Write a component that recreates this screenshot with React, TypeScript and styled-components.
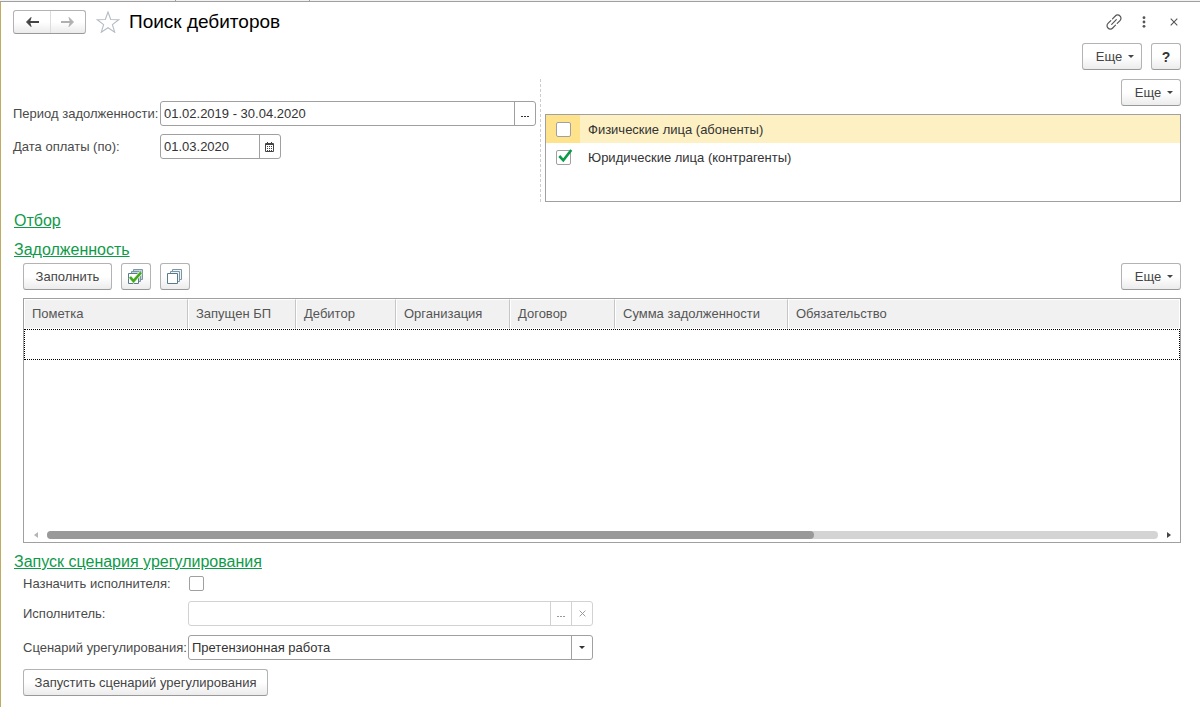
import React, { useState } from "react";
import styled, { createGlobalStyle, css } from "styled-components";

const GlobalStyle = createGlobalStyle`
  *, *::before, *::after { box-sizing: border-box; }
  body {
    margin: 0;
    background: #fff;
    color: #4a4a4a;
    font: 13px/16px "Liberation Sans", Arial, sans-serif;
  }
  button, input, select { font: inherit; color: inherit; }
`;

const Page = styled.div`
  display: flex;
  flex-direction: column;
  min-height: 100vh;
`;

const TabStrip = styled.div`
  display: flex;
  height: 2px;
  background: #f2f2f2;
  border-bottom: 1px solid #a0a0a0;
`;

const TabEdge = styled.span<{ $width: number }>`
  width: ${(p) => p.$width}px;
  border-right: 1px solid #a0a0a0;
`;

const Form = styled.main`
  flex: 1;
  display: flex;
  flex-direction: column;
  padding: 8px 19px 11px 12px;
  border-left: 1px solid #c0ab62;
`;

const TitleBar = styled.header`
  display: flex;
  align-items: center;
  height: 24px;
`;

const NavGroup = styled.div`
  display: flex;
  height: 24px;
  border: 1px solid #b3b3b3;
  border-bottom-color: #999;
  border-radius: 3px;
  background: linear-gradient(#fff 50%, #ebebeb);
`;

const NavButton = styled.button`
  display: grid;
  place-items: center;
  width: 36px;
  padding: 0;
  border: 0;
  background: none;
  color: #444;
  & + & {
    width: 35px;
    border-left: 1px solid #ddd;
    color: #b0b0b0;
  }
`;

const PlainButton = styled.button`
  display: grid;
  place-items: center;
  width: 24px;
  height: 24px;
  padding: 0;
  border: 0;
  background: none;
  color: #555;
`;

const StarButton = styled(PlainButton)`
  margin-left: 10px;
`;

const Title = styled.h1`
  flex: 1;
  margin: 0 0 0 9px;
  color: #000;
  font-size: 19px;
  line-height: 24px;
  font-weight: 400;
`;

const WindowActions = styled.div`
  display: flex;
  gap: 6px;
  margin-right: -5px;
`;

const Bar = styled.div<{ $end?: boolean }>`
  display: flex;
  gap: 9px;
  justify-content: ${(p) => (p.$end ? "flex-end" : "flex-start")};
`;

const TopBar = styled(Bar)`
  margin-top: 9px;
`;

const Spacer = styled.span`
  flex: 1;
`;

const Button = styled.button<{ $width?: number; $bold?: boolean }>`
  display: inline-flex;
  align-items: center;
  justify-content: center;
  gap: 6px;
  height: 27px;
  min-width: ${(p) => p.$width ?? 30}px;
  padding: 0;
  border: 1px solid #b3b3b3;
  border-bottom-color: #999;
  border-radius: 3px;
  background: linear-gradient(#fff 50%, #ececec);
  color: #444;
  white-space: nowrap;
  ${(p) => p.$bold && css`font-size: 14px; font-weight: 700; color: #333;`}
`;

const MoreButton = styled(Button)`
  width: 60px;
  padding: 0 6px 0 12px;
`;

const Params = styled.section`
  display: grid;
  grid-template-columns: minmax(0, 523fr) 9px minmax(0, 636fr);
  margin-top: 9px;
`;

const Splitter = styled.div`
  margin-left: 4px;
  border-left: 1px dashed #ccc;
`;

const ParamFields = styled.div`
  display: flex;
  flex-direction: column;
  gap: 8px;
  padding-top: 22px;
`;

const Row = styled.div<{ $labelWidth: number }>`
  display: grid;
  grid-template-columns: ${(p) => p.$labelWidth}px minmax(0, 1fr);
  align-items: center;
`;

const Label = styled.label`
  white-space: nowrap;
`;

const Field = styled.div<{ $width?: number; $disabled?: boolean }>`
  display: flex;
  height: 25px;
  width: 100%;
  ${(p) => p.$width && css`max-width: ${p.$width}px;`}
  --line: ${(p) => (p.$disabled ? "#d2d2d2" : "#a0a0a0")};
  border: 1px solid var(--line);
  border-radius: 3px;
  color: ${(p) => (p.$disabled ? "#999" : "#333")};
  background: #fff;
`;

const TextInput = styled.input`
  flex: 1;
  min-width: 0;
  padding: 0 3px;
  border: 0;
  outline: 0;
  background: none;
`;

const FieldButton = styled.button`
  display: grid;
  place-items: center;
  width: 21px;
  padding: 0;
  border: 0;
  border-left: 1px solid var(--line);
  background: none;
`;

const SelectBox = styled(Field)`
  display: grid;
  grid-template-columns: minmax(0, 1fr) 21px;
`;

const Select = styled.select`
  grid-area: 1 / 1 / 2 / 3;
  appearance: none;
  padding: 0 24px 0 3px;
  border: 0;
  outline: 0;
  background: none;
`;

const SelectArrow = styled.span`
  grid-area: 1 / 2 / 2 / 3;
  display: grid;
  place-items: center;
  border-left: 1px solid var(--line);
  pointer-events: none;
`;

const KindPanel = styled.div`
  display: flex;
  flex-direction: column;
  gap: 8px;
`;

const KindList = styled.ul`
  height: 88px;
  margin: 0;
  padding: 0;
  list-style: none;
  border: 1px solid #a0a0a0;
`;

const KindItem = styled.li<{ $current?: boolean }>`
  display: grid;
  grid-template-columns: 34px 1fr;
  height: 28px;
  background: ${(p) => (p.$current ? "#fdf1c4" : "#fff")};
  color: #333;
  & > span {
    display: grid;
    place-items: center;
    background: ${(p) => (p.$current ? "#fee38c" : "#fff")};
  }
  & > label {
    padding-left: 8px;
    line-height: 29px;
  }
`;

const CheckWrap = styled.span`
  display: grid;
  width: 15px;
  height: 15px;
  & > * {
    grid-area: 1 / 1;
  }
  & > svg {
    overflow: visible;
    pointer-events: none;
  }
`;

const CheckInput = styled.input`
  appearance: none;
  width: 15px;
  height: 15px;
  margin: 0;
  border: 1px solid #a0a0a0;
  border-radius: 2px;
  background: #fff;
`;

const Heading = styled.h2`
  margin: 0;
  font-size: 16px;
  line-height: 20px;
  font-weight: 400;
`;

const HeadingLink = styled.a`
  margin-left: 1px;
  color: #0f9a4a;
  text-decoration: underline;
`;

const Group = styled.section<{ $grow?: boolean }>`
  display: flex;
  flex-direction: column;
  flex: ${(p) => (p.$grow ? "1" : "none")};
  margin-top: 9px;
`;

const GroupBody = styled.div<{ $grow?: boolean; $gap: number; $top: number }>`
  display: flex;
  flex-direction: column;
  flex: ${(p) => (p.$grow ? "1" : "none")};
  gap: ${(p) => p.$gap}px;
  padding: ${(p) => p.$top}px 0 0 10px;
`;

const TablePanel = styled.div`
  display: flex;
  flex-direction: column;
  flex: 1;
  min-height: 160px;
  border: 1px solid #a0a0a0;
`;

const Table = styled.table`
  width: 100%;
  table-layout: fixed;
  border-collapse: separate;
  border-spacing: 0;
`;

const HeadCell = styled.th<{ $width?: number }>`
  ${(p) => p.$width && css`width: ${p.$width}px;`}
  height: 30px;
  padding: 0 7px;
  border: 1px solid #fff;
  border-right-color: #c6c6c6;
  background: #f1f1f1;
  color: #555;
  font-weight: 400;
  text-align: left;
  white-space: nowrap;
  &:last-child {
    border-right-color: #fff;
  }
`;

const CurrentRow = styled.tr`
  outline: 1px dotted #000;
  outline-offset: -1px;
`;

const BodyCell = styled.td`
  height: 31px;
  padding: 0;
`;

const ScrollBar = styled.div`
  display: flex;
  align-items: center;
  gap: 9px;
  margin-top: auto;
  height: 15px;
  padding: 0 8px 0 9px;
`;

const Track = styled.div`
  flex: 1;
  height: 8px;
  border-radius: 4px;
  background: #d4d4d4;
`;

const Thumb = styled.div`
  width: 69%;
  height: 8px;
  border-radius: 4px;
  background: #999;
`;

const CheckRow = styled(Row)`
  height: 17px;
`;

const BackArrow = () => (
  <svg width="14" height="10" viewBox="0 0 14 10" fill="none" stroke="currentColor" strokeWidth="2">
    <path d="M14 5H3" />
    <path d="M6 .5 1.500 5 6 9.500 4.500 5z" fill="currentColor" strokeWidth="1" />
  </svg>
);

const ForwardArrow = () => (
  <svg width="14" height="10" viewBox="0 0 14 10" fill="none" stroke="currentColor" strokeWidth="2">
    <path d="M0 5H11" />
    <path d="M8 .5 12.500 5 8 9.500 9.500 5z" fill="currentColor" strokeWidth="1" />
  </svg>
);

const Star = () => (
  <svg width="24" height="22" viewBox="0 0 24 22" fill="none" stroke="#b4bcc4" strokeWidth="1.100">
    <path d="M12 1l2.700 7.500 8 .2-6.300 4.900 2.300 7.600L12 16.700l-6.700 4.500 2.300-7.600L1.300 8.700l8-.2z" />
  </svg>
);

const LinkIcon = () => (
  <svg width="16" height="16" viewBox="0 0 16 16" fill="none" stroke="currentColor" strokeWidth="1.200" strokeLinecap="round">
    <path d="M6.500 4.800 9.300 2a3.200 3.200 0 0 1 4.700 0 3.200 3.200 0 0 1 0 4.600L11.200 9.400" />
    <path d="M9.500 11.200 6.700 14a3.200 3.200 0 0 1-4.700 0 3.200 3.200 0 0 1 0-4.600L4.800 6.600" />
    <path d="M5.700 10.300 10.300 5.700" />
  </svg>
);

const Dots = () => (
  <svg width="4" height="12" viewBox="0 0 4 12" fill="currentColor">
    <circle cx="2" cy="1.700" r="1.400" />
    <circle cx="2" cy="6" r="1.400" />
    <circle cx="2" cy="10.300" r="1.400" />
  </svg>
);

const Cross = ({ size }: { size: number }) => (
  <svg width={size} height={size} viewBox="0 0 8 8" fill="none" stroke="currentColor" strokeWidth="1.100">
    <path d="M.7.7l6.600 6.600M7.300.7.7 7.300" />
  </svg>
);

const Caret = () => (
  <svg width="6" height="3" viewBox="0 0 6 3" fill="currentColor">
    <path d="M0 0h6L3 3z" />
  </svg>
);

const Ellipsis = () => (
  <svg width="9" height="9" viewBox="0 0 9 9" fill="currentColor">
    <path d="M0 7h2v1H0zM3 7h2v1H3zM6 7h2v1H6z" />
  </svg>
);

const CalendarIcon = () => (
  <svg width="10" height="10" viewBox="0 0 10 10" fill="none" stroke="#444">
    <path d="M.5 1.500h8v8h-8zM.5 2.500h8M2.500 0v2M6.500 0v2" />
    <path d="M2 4.500h6M2 6.500h6M2 8.500h6" strokeDasharray="1 1" />
  </svg>
);

const Tick = () => (
  <svg width="15" height="15" viewBox="0 0 15 15" fill="none" stroke="#0c9a48" strokeWidth="2.600">
    <path d="M3.300 6l4 4.300L15.300 0" />
  </svg>
);

const Stack = ({ checked }: { checked?: boolean }) => (
  <svg width="16" height="16" viewBox="0 0 16 16" fill={checked ? "#c5d9dc" : "#eef4f7"} stroke="#7c96a5">
    <path d="M5.500.5h9v10h-9z" />
    <path d="M3.500 2.500h9v10h-9z" />
    <path d="M.5 4.500h10v10H.5z" fill="#fff" stroke="#587a8c" />
    {checked && <path d="M2 8l3.500 4L13 3.500" fill="none" stroke="#e4f5d8" strokeWidth="4" />}
    {checked && <path d="M2 8l3.500 4L13 3.500" fill="none" stroke="#43a81c" strokeWidth="2.600" />}
  </svg>
);

const ScrollArrow = ({ right }: { right?: boolean }) => (
  <svg width="5" height="6" viewBox="0 0 5 6" fill={right ? "#444" : "#b5b5b5"}>
    <path d={right ? "M0 0v6l4-3z" : "M5 0v6L1 3z"} />
  </svg>
);

interface CheckProps {
  id: string;
  checked: boolean;
  onChange: (value: boolean) => void;
}

const CheckBox = ({ id, checked, onChange }: CheckProps) => (
  <CheckWrap>
    <CheckInput id={id} type="checkbox" checked={checked} onChange={(e) => onChange(e.target.checked)} />
    {checked && <Tick />}
  </CheckWrap>
);

const More = () => (
  <MoreButton type="button">
    Еще <Caret />
  </MoreButton>
);

const columns: { title: string; width?: number }[] = [
  { title: "Пометка", width: 164 },
  { title: "Запущен БП", width: 108 },
  { title: "Дебитор", width: 100 },
  { title: "Организация", width: 114 },
  { title: "Договор", width: 105 },
  { title: "Сумма задолженности", width: 173 },
  { title: "Обязательство" },
];

export default function App() {
  const [persons, setPersons] = useState(false);
  const [companies, setCompanies] = useState(true);
  const [assign, setAssign] = useState(false);
  const [period, setPeriod] = useState("01.02.2019 - 30.04.2020");
  const [date, setDate] = useState("01.03.2020");

  return (
    <Page>
      <GlobalStyle />
      <TabStrip>
        <TabEdge $width={176} />
        <TabEdge $width={134} />
      </TabStrip>
      <Form>
        <TitleBar>
          <NavGroup>
            <NavButton type="button" aria-label="Назад"><BackArrow /></NavButton>
            <NavButton type="button" aria-label="Вперед"><ForwardArrow /></NavButton>
          </NavGroup>
          <StarButton type="button" aria-label="В избранное"><Star /></StarButton>
          <Title>Поиск дебиторов</Title>
          <WindowActions>
            <PlainButton type="button" aria-label="Ссылка"><LinkIcon /></PlainButton>
            <PlainButton type="button" aria-label="Меню"><Dots /></PlainButton>
            <PlainButton type="button" aria-label="Закрыть"><Cross size={8} /></PlainButton>
          </WindowActions>
        </TitleBar>

        <TopBar $end>
          <More />
          <Button type="button" $bold>?</Button>
        </TopBar>

        <Params>
          <ParamFields>
            <Row $labelWidth={147}>
              <Label htmlFor="period">Период задолженности:</Label>
              <Field>
                <TextInput id="period" value={period} onChange={(e) => setPeriod(e.target.value)} />
                <FieldButton type="button" aria-label="Выбрать период"><Ellipsis /></FieldButton>
              </Field>
            </Row>
            <Row $labelWidth={147}>
              <Label htmlFor="date">Дата оплаты (по):</Label>
              <Field $width={121}>
                <TextInput id="date" value={date} onChange={(e) => setDate(e.target.value)} />
                <FieldButton type="button" aria-label="Календарь"><CalendarIcon /></FieldButton>
              </Field>
            </Row>
          </ParamFields>
          <Splitter />
          <KindPanel>
            <Bar $end><More /></Bar>
            <KindList>
              <KindItem $current>
                <span><CheckBox id="persons" checked={persons} onChange={setPersons} /></span>
                <label htmlFor="persons">Физические лица (абоненты)</label>
              </KindItem>
              <KindItem>
                <span><CheckBox id="companies" checked={companies} onChange={setCompanies} /></span>
                <label htmlFor="companies">Юридические лица (контрагенты)</label>
              </KindItem>
            </KindList>
          </KindPanel>
        </Params>

        <Group>
          <Heading><HeadingLink href="#filter">Отбор</HeadingLink></Heading>
        </Group>

        <Group $grow>
          <Heading><HeadingLink href="#debt">Задолженность</HeadingLink></Heading>
          <GroupBody $grow $gap={8} $top={3}>
            <Bar>
              <Button type="button" $width={89}>Заполнить</Button>
              <Button type="button" aria-label="Отметить все"><Stack checked /></Button>
              <Button type="button" aria-label="Снять отметки"><Stack /></Button>
              <Spacer />
              <More />
            </Bar>
            <TablePanel>
              <Table>
                <thead>
                  <tr>
                    {columns.map((c) => (
                      <HeadCell key={c.title} $width={c.width} scope="col">{c.title}</HeadCell>
                    ))}
                  </tr>
                </thead>
                <tbody>
                  <CurrentRow>
                    {columns.map((c) => <BodyCell key={c.title} />)}
                  </CurrentRow>
                </tbody>
              </Table>
              <ScrollBar>
                <ScrollArrow />
                <Track><Thumb /></Track>
                <ScrollArrow right />
              </ScrollBar>
            </TablePanel>
          </GroupBody>
        </Group>

        <Group>
          <Heading><HeadingLink href="#scenario">Запуск сценария урегулирования</HeadingLink></Heading>
          <GroupBody $gap={9} $top={3}>
            <CheckRow $labelWidth={166}>
              <Label htmlFor="assign">Назначить исполнителя:</Label>
              <CheckBox id="assign" checked={assign} onChange={setAssign} />
            </CheckRow>
            <Row $labelWidth={165}>
              <Label htmlFor="executor">Исполнитель:</Label>
              <Field $width={405} $disabled>
                <TextInput id="executor" disabled />
                <FieldButton type="button" disabled aria-label="Выбрать"><Ellipsis /></FieldButton>
                <FieldButton type="button" disabled aria-label="Очистить"><Cross size={7} /></FieldButton>
              </Field>
            </Row>
            <Row $labelWidth={165}>
              <Label htmlFor="scenario">Сценарий урегулирования:</Label>
              <SelectBox $width={405}>
                <Select id="scenario" defaultValue="claim">
                  <option value="claim">Претензионная работа</option>
                </Select>
                <SelectArrow><Caret /></SelectArrow>
              </SelectBox>
            </Row>
            <Bar>
              <Button type="button" $width={245}>Запустить сценарий урегулирования</Button>
            </Bar>
          </GroupBody>
        </Group>
      </Form>
    </Page>
  );
}
